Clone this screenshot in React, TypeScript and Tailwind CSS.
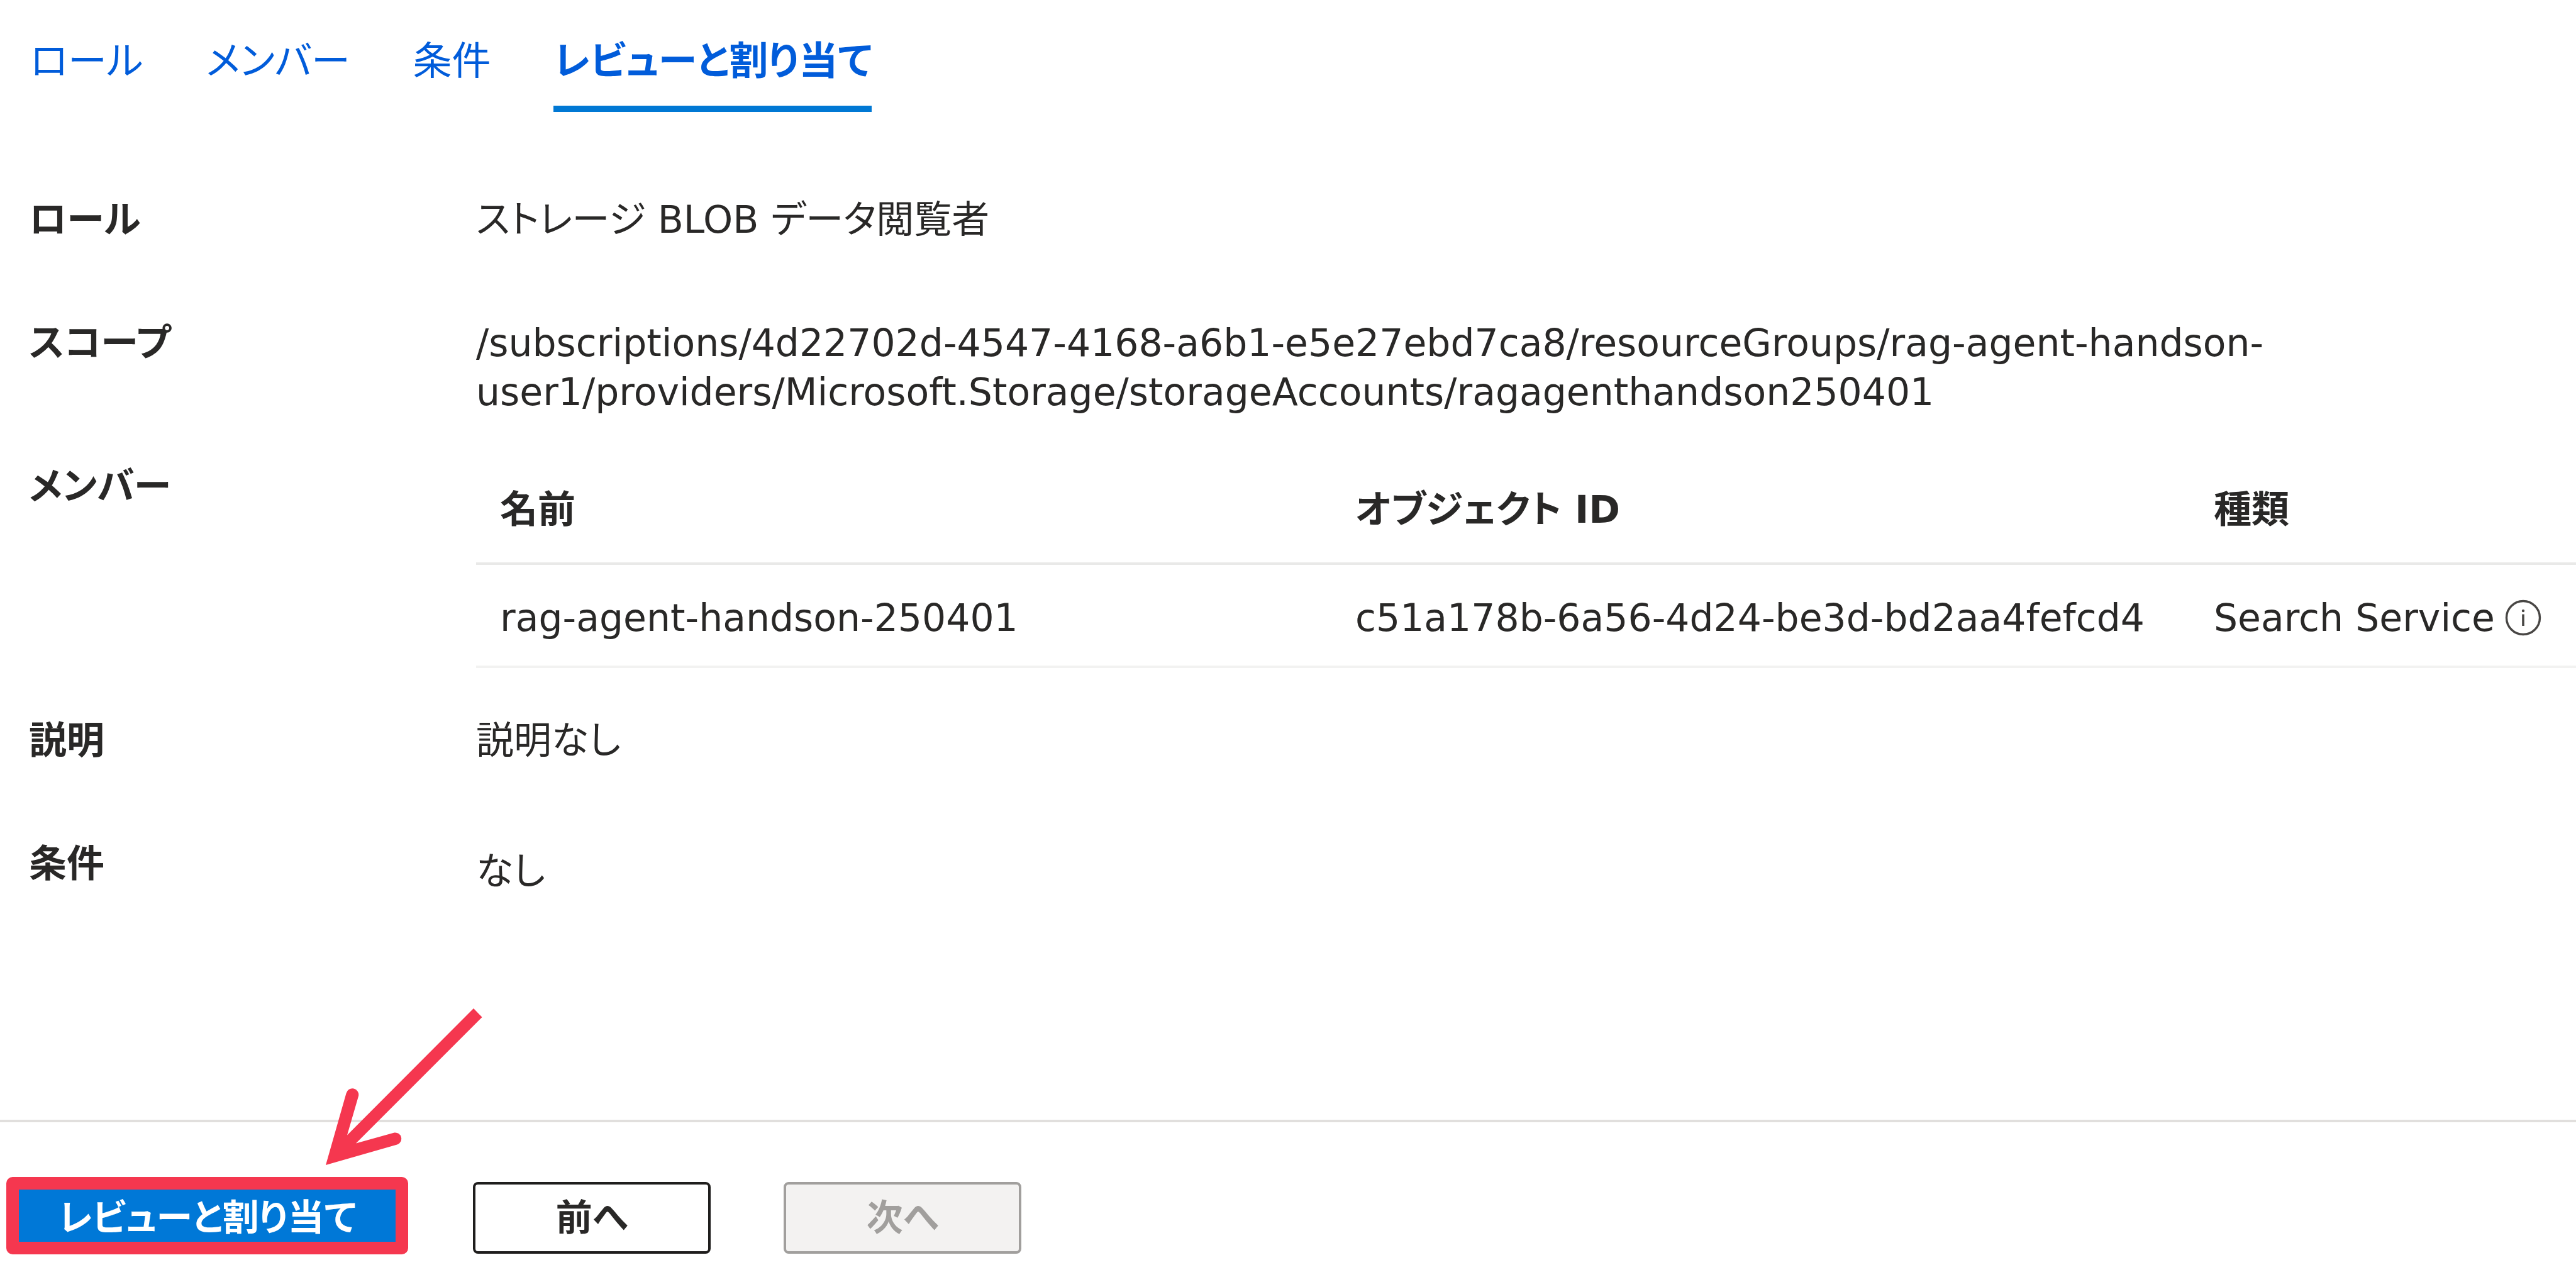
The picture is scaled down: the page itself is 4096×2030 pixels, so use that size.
import React from "react";

const tabs = [
  { label: "ロール", active: false },
  { label: "メンバー", active: false },
  { label: "条件", active: false },
  { label: "レビューと割り当て", active: true },
];

function InfoIcon() {
  return (
    <svg className="size-[58px] shrink-0" viewBox="0 0 58 58" fill="none" role="img" aria-label="情報">
      <circle cx="29" cy="29" r="26.5" stroke="#484644" strokeWidth="3.4" />
      <circle cx="29" cy="18" r="2.2" fill="#484644" />
      <path d="M29 23.5V42" stroke="#484644" strokeWidth="3.6" />
    </svg>
  );
}

function Arrow() {
  return (
    <svg
      className="pointer-events-none absolute -top-[184px] left-[516px] h-[256px] w-[252px]"
      viewBox="516 1600 252 256"
      aria-hidden="true"
    >
      <path
        fill="#f5374f"
        d="M753 1603 L766.5 1617 L566 1817.5 L627 1800.5 A9.8 9.8 0 0 1 631.5 1819.5 L518 1852 L550.5 1738 A9.8 9.8 0 0 1 570 1742.5 L552 1804.5 Z"
      />
    </svg>
  );
}

function Row({ label, children }: { label: string; children: React.ReactNode }) {
  return (
    <>
      <dt className="font-bold">{label}</dt>
      <dd>{children}</dd>
    </>
  );
}

export default function App() {
  return (
    <div className="flex min-h-screen flex-col overflow-x-hidden bg-white font-['DejaVu_Sans','Noto_Sans_CJK_JP',sans-serif] text-[60px] leading-[78px] text-[#292827] [font-feature-settings:'palt']">
      <nav className="flex gap-[100px] px-12 pt-12 text-[62px] leading-[100px]">
        {tabs.map((t) => (
          <a
            key={t.label}
            href="#"
            aria-current={t.active ? "page" : undefined}
            className={
              t.active
                ? "border-b-[10px] border-[#0078d4] pb-5 font-bold text-[#015cda]"
                : "pb-5 text-[#015cda]"
            }
          >
            {t.label}
          </a>
        ))}
      </nav>

      <dl className="grid grid-cols-[711px_1fr] pl-[46px] pt-[132px]">
        <Row label="ロール">
          <p className="pb-[118px]">ストレージ BLOB データ閲覧者</p>
        </Row>
        <Row label="スコープ">
          <p className="pb-[72px]">
            /subscriptions/4d22702d-4547-4168-a6b1-e5e27ebd7ca8/resourceGroups/rag-agent-handson-
            <br />
            user1/providers/Microsoft.Storage/storageAccounts/ragagenthandson250401
          </p>
        </Row>
        <Row label="メンバー">
          <table className="mb-[76px] w-full table-fixed border-collapse text-left">
            <thead>
              <tr className="h-[162px] border-b-4 border-[#e9e9e8]">
                <th className="w-[1360px] pb-2 pl-[38px] font-bold">名前</th>
                <th className="w-[1365px] pb-2 pl-[38px] font-bold">オブジェクト ID</th>
                <th className="pb-2 pl-[38px] font-bold">種類</th>
              </tr>
            </thead>
            <tbody>
              <tr className="h-[164px] border-b-4 border-[#f2f2f1]">
                <td className="pl-[38px] pt-2">rag-agent-handson-250401</td>
                <td className="pl-[38px] pt-2">c51a178b-6a56-4d24-be3d-bd2aa4fefcd4</td>
                <td className="pl-[38px] pt-2">
                  <span className="flex items-center gap-4 whitespace-nowrap">
                    Search Service
                    <InfoIcon />
                  </span>
                </td>
              </tr>
            </tbody>
          </table>
        </Row>
        <Row label="説明">
          <p className="pb-[118px]">説明なし</p>
        </Row>
        <Row label="条件">
          <p className="pt-3">なし</p>
        </Row>
      </dl>

      <footer className="relative mt-auto flex border-t-4 border-[#e1dfdd] pb-[37px] pl-[23px] pt-[95px] text-[58px]">
        <Arrow />
        <div className="relative mr-[116px]">
          <button type="button" className="h-[114px] w-[613px] bg-[#0078d7] text-center font-bold text-white">
            レビューと割り当て
          </button>
          <span className="pointer-events-none absolute -bottom-px -left-[13px] -right-[13px] -top-2 rounded-[10px] border-[20px] border-[#f5374f]" />
        </div>
        <button type="button" className="mr-[116px] h-[114px] w-[378px] rounded-lg border-4 border-[#1f1e1d] bg-white font-bold">
          前へ
        </button>
        <button type="button" disabled className="h-[114px] w-[378px] rounded-lg border-4 border-[#a19f9d] bg-[#f3f2f1] font-bold text-[#a19f9d]">
          次へ
        </button>
      </footer>
    </div>
  );
}
